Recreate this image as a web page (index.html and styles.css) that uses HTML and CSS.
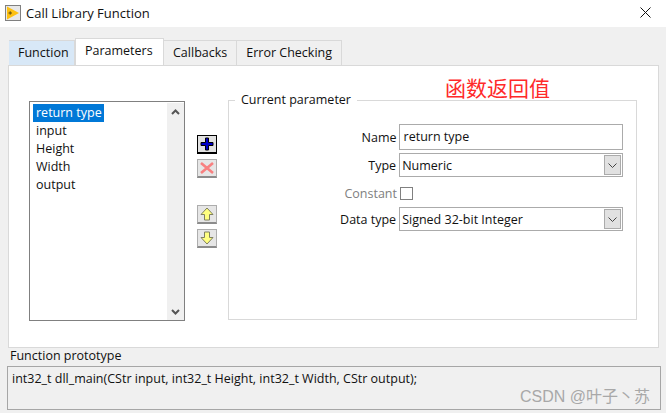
FILE: index.html
```html
<!DOCTYPE html>
<html lang="en">
<head>
<meta charset="UTF-8">
<title>Call Library Function</title>
<link rel="stylesheet" href="styles.css">
</head>
<body>

<div class="titlebar">
    <svg class="app-icon" width="16" height="16" viewBox="0 0 16 16">
        <rect x="0.5" y="0.5" width="15" height="15" fill="#e8e8e8" stroke="#808080"/>
        <path d="M2 1.5 L14 8 L2 14.5 Z" fill="#fdc010"/>
        <path d="M3.5 8 H7 M5.2 6.3 V9.7" stroke="#5a4a10" stroke-width="1"/>
    </svg>
    <span class="title">Call Library Function</span>
    <svg class="close" width="11" height="11" viewBox="0 0 11 11">
        <path d="M0.5 0.5 L10.5 10.5 M10.5 0.5 L0.5 10.5" stroke="#111" stroke-width="1"/>
    </svg>
</div>

<div class="dialog">
    <div class="tabs">
        <div class="tab tab-hover">Function</div>
        <div class="tab tab-active">Parameters</div>
        <div class="tab">Callbacks</div>
        <div class="tab">Error Checking</div>
    </div>

    <div class="panel">
        <div class="note">函数返回值</div>

        <div class="listbox">
            <ul class="items">
                <li><span class="selected">return type</span></li>
                <li>input</li>
                <li>Height</li>
                <li>Width</li>
                <li>output</li>
            </ul>
            <div class="scrollbar">
                <svg width="9" height="6" viewBox="0 0 9 6"><path d="M1 5 L4.5 1.5 L8 5" fill="none" stroke="#555" stroke-width="2"/></svg>
                <svg width="9" height="6" viewBox="0 0 9 6"><path d="M1 1 L4.5 4.5 L8 1" fill="none" stroke="#555" stroke-width="2"/></svg>
            </div>
        </div>

        <div class="tools">
            <button class="tool tool-default">
                <svg width="14" height="14" viewBox="0 0 14 14"><path d="M5.5 1 H8.5 V5.5 H13 V8.5 H8.5 V13 H5.5 V8.5 H1 V5.5 H5.5 Z" fill="#0000c8" stroke="#000" stroke-width="1"/></svg>
            </button>
            <button class="tool">
                <svg width="14" height="12" viewBox="0 0 14 12"><path d="M1 1 L13 11 M13 1 L1 11" stroke="#f88080" stroke-width="2.6"/></svg>
            </button>
            <button class="tool tool-gap">
                <svg width="14" height="14" viewBox="0 0 14 14"><path d="M7 1 L13 7.5 H9.5 V13 H4.5 V7.5 H1 Z" fill="#ffff80" stroke="#808060" stroke-width="1"/></svg>
            </button>
            <button class="tool">
                <svg width="14" height="14" viewBox="0 0 14 14"><path d="M7 13 L13 6.5 H9.5 V1 H4.5 V6.5 H1 Z" fill="#ffff80" stroke="#808060" stroke-width="1"/></svg>
            </button>
        </div>

        <fieldset class="group">
            <legend>Current parameter</legend>
            <div class="field">
                <label>Name</label>
                <div class="input">return type</div>
            </div>
            <div class="field">
                <label>Type</label>
                <div class="select">
                    <span>Numeric</span>
                    <span class="arrow"><svg width="9" height="5" viewBox="0 0 9 5"><path d="M0.5 0.5 L4.5 4.5 L8.5 0.5" fill="none" stroke="#444"/></svg></span>
                </div>
            </div>
            <div class="field field-check">
                <label class="disabled">Constant</label>
                <div class="checkbox"></div>
            </div>
            <div class="field">
                <label>Data type</label>
                <div class="select">
                    <span>Signed 32-bit Integer</span>
                    <span class="arrow"><svg width="9" height="5" viewBox="0 0 9 5"><path d="M0.5 0.5 L4.5 4.5 L8.5 0.5" fill="none" stroke="#444"/></svg></span>
                </div>
            </div>
        </fieldset>
    </div>

    <div class="proto-label">Function prototype</div>
    <div class="proto">int32_t dll_main(CStr input, int32_t Height, int32_t Width, CStr output);
        <span class="watermark">CSDN @叶子丶苏</span>
    </div>
</div>

</body>
</html>
```

FILE: styles.css
```css
* {
    box-sizing: border-box;
}

html, body {
    height: 100%;
}

body {
    margin: 0;
    font-family: "Open Sans", "Noto Sans CJK SC", sans-serif;
    font-size: 12.5px;
    color: #111;
    background-color: #f0f0f0;
    overflow: hidden;
}

.titlebar {
    display: flex;
    align-items: center;
    height: 27px;
    padding: 0 15px 2px 5px;
    background-color: #fff;
}

.app-icon {
    margin-right: 5px;
}

.title {
    flex: 1;
    font-size: 13px;
}

.dialog {
    padding: 10px 7px 0 8px;
}

.tabs {
    display: flex;
    align-items: flex-end;
    height: 28px;
    padding-left: 1px;
}

.tab {
    height: 25px;
    padding: 3px 9px 0;
    border: 1px solid #d9d9d9;
    border-bottom: none;
    border-left: none;
}

.tab-hover {
    background-color: #d8e8f7;
    width: 66px;
}

.tab-active {
    position: relative;
    top: 1px;
    height: 28px;
    width: 89px;
    background-color: #fff;
    border-left: 1px solid #d9d9d9;
    padding-top: 3px;
}

.panel {
    position: relative;
    display: flex;
    align-items: flex-start;
    height: 283px;
    padding: 25px 21px 0 20px;
    background-color: #fff;
    border: 1px solid #d9d9d9;
}

.note {
    position: absolute;
    left: 436px;
    top: 7px;
    font-family: "Noto Sans CJK SC", sans-serif;
    font-size: 21px;
    line-height: 28px;
    color: #ff2a2a;
}

.listbox {
    display: flex;
    width: 156px;
    height: 220px;
    margin-top: 10px;
    padding-top: 1px;
    border: 1px solid #808080;
}

.items {
    flex: 1;
    list-style: none;
    margin: 0;
    padding: 1px 3px;
}

.items li {
    height: 18px;
    line-height: 18px;
    padding-left: 3px;
}

.selected {
    display: inline-block;
    margin-left: -3px;
    padding: 0 2px 0 3px;
    color: #fff;
    background-color: #0078d7;
}

.scrollbar {
    display: flex;
    flex-direction: column;
    justify-content: space-between;
    align-items: center;
    width: 17px;
    padding: 6px 0 5px;
    background-color: #f0f0f0;
}

.tools {
    display: flex;
    flex-direction: column;
    gap: 5px;
    width: 20px;
    margin: 44px 11px 0 12px;
}

.tool {
    display: flex;
    align-items: center;
    justify-content: center;
    width: 20px;
    height: 19px;
    padding: 0;
    background-color: #e6e6e6;
    border: 1px solid #adadad;
    border-bottom: 2px solid #8c8c8c;
}

.tool-default {
    background-color: #e1e1e1;
    border: 1px solid #000;
    border-bottom: 2px solid #000;
}

.tool-gap {
    margin-top: 22px;
}

.group {
    flex: 1;
    height: 229px;
    margin: 0;
    padding: 15px 13px 0 0;
    border: 1px solid #d9d9d9;
    min-width: 0;
}

.group legend {
    margin-left: 6px;
    padding: 0 6px;
    line-height: 18px;
}

.field {
    display: flex;
    align-items: center;
    margin-bottom: 3px;
}

.field label {
    width: 170px;
    padding-right: 2px;
    text-align: right;
}

.disabled {
    color: #808080;
}

.input {
    width: 225px;
    height: 26px;
    line-height: 24px;
    padding-left: 4px;
    border: 1px solid #ababab;
    background-color: #fff;
}

.select {
    display: flex;
    align-items: center;
    justify-content: space-between;
    width: 225px;
    height: 24px;
    margin-left: 1px;
    padding: 1px 1px 1px 2px;
    border: 1px solid #ababab;
}

.arrow {
    display: flex;
    align-items: center;
    justify-content: center;
    width: 17px;
    height: 20px;
    background-color: #e1e1e1;
    border: 1px solid #ababab;
}

.field-check {
    height: 26px;
    margin-bottom: 1px;
}

.checkbox {
    width: 13px;
    height: 13px;
    margin-left: 1px;
    border: 1px solid #808080;
    background-color: #fff;
}

.proto-label {
    height: 18px;
    line-height: 16px;
    padding-left: 2px;
    margin-top: 0;
}

.proto {
    position: relative;
    width: 654px;
    height: 44px;
    margin-left: -1px;
    padding: 3px 4px;
    border: 1px solid #a6a6a6;
}

.watermark {
    position: absolute;
    right: 10px;
    bottom: 2px;
    font-family: "Liberation Sans", "Noto Sans CJK SC", sans-serif;
    font-size: 16px;
    color: #a8a8a8;
}
```
